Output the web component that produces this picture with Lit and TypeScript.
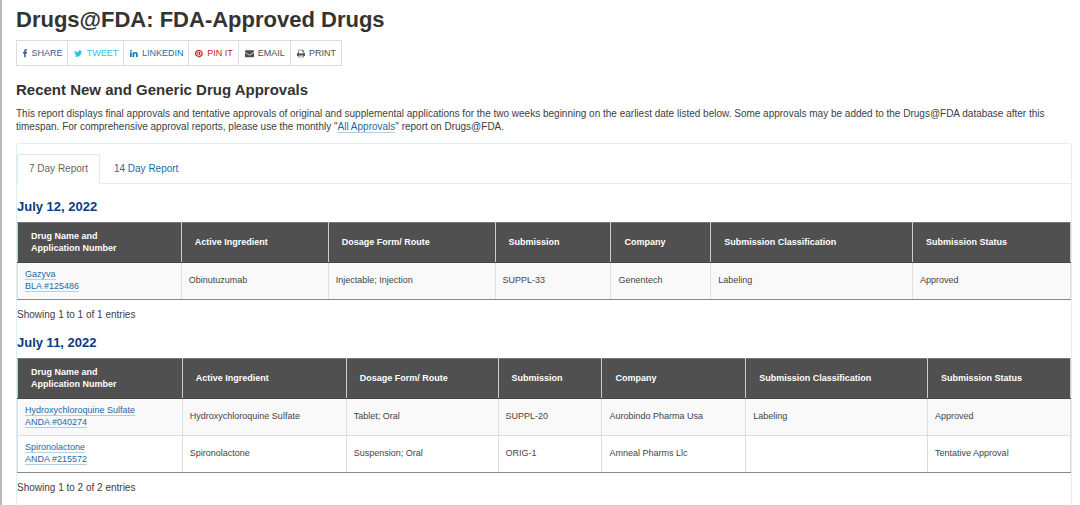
import { LitElement, html, css, svg } from "lit";
import { customElement, property, state } from "lit/decorators.js";
import { classMap } from "lit/directives/class-map.js";

interface Approval {
  name: string;
  application: string;
  ingredient: string;
  form: string;
  submission: string;
  company: string;
  classification: string;
  status: string;
}

interface Report {
  date: string;
  columns: number[];
  rows: Approval[];
}

const HEADINGS = [
  "Drug Name and Application Number",
  "Active Ingredient",
  "Dosage Form/ Route",
  "Submission",
  "Company",
  "Submission Classification",
  "Submission Status",
];

const REPORTS: Report[] = [
  {
    date: "July 12, 2022",
    columns: [164, 147, 167, 116, 100, 202, 158],
    rows: [
      {
        name: "Gazyva",
        application: "BLA #125486",
        ingredient: "Obinutuzumab",
        form: "Injectable; Injection",
        submission: "SUPPL-33",
        company: "Genentech",
        classification: "Labeling",
        status: "Approved",
      },
    ],
  },
  {
    date: "July 11, 2022",
    columns: [165, 164, 152, 104, 144, 182, 143],
    rows: [
      {
        name: "Hydroxychloroquine Sulfate",
        application: "ANDA #040274",
        ingredient: "Hydroxychloroquine Sulfate",
        form: "Tablet; Oral",
        submission: "SUPPL-20",
        company: "Aurobindo Pharma Usa",
        classification: "Labeling",
        status: "Approved",
      },
      {
        name: "Spironolactone",
        application: "ANDA #215572",
        ingredient: "Spironolactone",
        form: "Suspension; Oral",
        submission: "ORIG-1",
        company: "Amneal Pharms Llc",
        classification: "",
        status: "Tentative Approval",
      },
    ],
  },
];

const SHARES = [
  {
    id: "facebook",
    label: "Share",
    box: "500 0 880 1792",
    path: "M1343 12v264h-157q-86 0-116 36t-30 108v189h293l-39 296h-254v759h-306v-759h-255v-296h255v-218q0-186 104-288.5t277-102.5q147 0 228 12z",
  },
  {
    id: "twitter",
    label: "Tweet",
    box: "64 0 1664 1792",
    path: "M1684 408q-67 98-162 167 1 14 1 42 0 130-38 259.5t-115.5 248.5-184.5 210.5-258 146-323 54.5q-271 0-496-145 35 4 78 4 225 0 401-138-105-2-188-64.5t-114-159.5q33 5 61 5 43 0 85-11-112-23-185.5-111.5t-73.5-205.5v-4q68 38 146 41-66-44-105-115t-39-154q0-88 44-163 121 149 294.5 238.5t371.5 99.5q-8-38-8-74 0-134 94.5-228.5t228.5-94.5q140 0 236 102 109-21 205-78-37 115-142 178 93-10 186-50z",
  },
  {
    id: "linkedin",
    label: "Linkedin",
    box: "128 0 1536 1792",
    path: "M477 625v991h-330v-991h330zm21-306q1 73-50.5 122t-135.5 49h-2q-82 0-132-49t-50-122q0-74 51.5-122.5t134.5-48.5 133 48.5 51 122.5zm1166 729v568h-329v-530q0-105-40.5-164.5t-126.5-59.5q-63 0-105.5 34.5t-63.5 85.5q-11 30-11 81v553h-329q2-399 2-647t-1-296l-1-48h329v144h-2q20-32 41-56t56.5-52 87-43.5 114.5-15.5q171 0 275 113.5t104 332.5z",
  },
  {
    id: "pinterest",
    label: "Pin it",
    box: "128 0 1536 1792",
    path: "M1664 896q0 209-103 385.5t-279.5 279.5-385.5 103q-111 0-218-32 59-93 78-164 9-34 54-211 20 39 73 67.5t114 28.5q121 0 216-68.5t147-188.5 52-270q0-114-59.5-214t-172.5-163-255-63q-105 0-196 29t-154.5 77-109 110.5-67 129.5-21.5 134q0 104 40 183t117 111q30 12 38-20 2-7 8-31t8-30q6-23-11-43-51-61-51-151 0-151 104.5-259.5t273.5-108.5q151 0 235.5 82t84.5 213q0 170-68.5 289t-175.5 119q-61 0-98-43.5t-23-104.5q8-35 26.5-93.5t30-103 11.5-75.5q0-50-27-83t-77-33q-62 0-105 57t-43 142q0 73 25 122l-99 418q-17 70-13 177-206-91-333-281t-127-423q0-209 103-385.5t279.5-279.5 385.5-103 385.5 103 279.5 279.5 103 385.5z",
  },
  {
    id: "email",
    label: "Email",
    box: "0 0 1792 1792",
    path: "M1792 710v794q0 66-47 113t-113 47h-1472q-66 0-113-47t-47-113v-794q44 49 101 87 362 246 497 345 57 42 92.5 65.5t94.5 48 110 24.5h2q51 0 110-24.5t94.5-48 92.5-65.5q170-123 498-345 57-39 100-87zm0-294q0 79-49 151t-122 123q-376 261-468 325-10 7-42.5 31t-54 38.5-52 32.5-57.5 27-50 9h-2q-23 0-50-9t-57.5-27-52-32.5-54-38.5-42.5-31q-91-64-262-182.5t-205-142.5q-62-42-117-115.5t-55-136.5q0-78 41.5-130t118.5-52h1472q65 0 112.5 47t47.5 113z",
  },
  {
    id: "print",
    label: "Print",
    box: "64 0 1664 1792",
    path: "M448 1536h896v-256h-896v256zm0-640h896v-384h-160q-40 0-68-28t-28-68v-160h-640v640zm1152 64q0-26-19-45t-45-19-45 19-19 45 19 45 45 19 45-19 19-45zm128 0v416q0 13-9.5 22.5t-22.5 9.5h-224v160q0 40-28 68t-68 28h-960q-40 0-68-28t-28-68v-160h-224q-13 0-22.5-9.5t-9.5-22.5v-416q0-79 56.5-135.5t135.5-56.5h64v-544q0-40 28-68t68-28h672q40 0 88 20t76 48l152 152q28 28 48 76t20 88v256h64q79 0 135.5 56.5t56.5 135.5z",
  },
];

@customElement("share-bar")
export class ShareBar extends LitElement {
  static styles = css`
    :host {
      display: block;
    }
    .list {
      display: flex;
      margin: 0;
      padding: 0;
      list-style: none;
    }
    .item + .item {
      margin-left: -1px;
    }
    .link {
      display: flex;
      align-items: center;
      gap: 4px;
      height: 24px;
      padding: 0 5px 0 6px;
      border: 1px solid #ddd;
      font-size: 9px;
      text-transform: uppercase;
      text-decoration: none;
      white-space: nowrap;
    }
    .icon {
      display: block;
      height: 9px;
      fill: currentColor;
    }
    .facebook {
      color: #3b5998;
    }
    .twitter {
      color: #2fc2ef;
    }
    .linkedin {
      color: #0e76a8;
    }
    .pinterest {
      color: #c92228;
    }
    .email,
    .print {
      color: #4d4d4d;
    }
  `;

  render() {
    return html`<ul class="list">
      ${SHARES.map(
        (s) => html`<li class="item">
          <a class="link ${s.id}" href="#${s.id}">
            <svg class="icon" viewBox=${s.box} aria-hidden="true">${svg`<path d=${s.path}></path>`}</svg
            ><span>${s.label}</span>
          </a>
        </li>`
      )}
    </ul>`;
  }
}

@customElement("approval-report")
export class ApprovalReport extends LitElement {
  @property({ attribute: false }) report!: Report;

  static styles = css`
    :host {
      display: block;
    }
    .date {
      margin: 0 0 7px;
      color: #0a3a82;
      font-size: 13px;
      line-height: 16px;
    }
    .table {
      width: 100%;
      table-layout: fixed;
      border-collapse: collapse;
      font-size: 9px;
      line-height: 12px;
    }
    .head {
      height: 37px;
      padding: 0 36px 2px 13px;
      border: 1px solid #ccc;
      border-top-color: #777;
      border-bottom-color: #444;
      background: #505050;
      color: #fff;
      text-align: left;
      white-space: nowrap;
    }
    .head:first-child {
      white-space: normal;
    }
    .cell {
      height: 34px;
      padding: 0 7px 2px;
      border: 1px solid #ddd;
      color: #444;
    }
    .row:nth-child(odd) {
      background: #f9f9f9;
    }
    .row:last-child .cell {
      border-bottom-color: #888;
    }
    .drug {
      color: #1b6aa5;
      text-decoration: none;
    }
    .line {
      border-bottom: 1px solid #b4cfe2;
    }
    .summary {
      margin: 8px 0 0;
      font-size: 10px;
      line-height: 13px;
    }
  `;

  render() {
    const { date, columns, rows } = this.report;
    const total = columns.reduce((a, b) => a + b, 0);
    return html`
      <h3 class="date">${date}</h3>
      <table class="table" aria-label="Approvals on ${date}">
        <colgroup>
          ${columns.map((c) => html`<col style="width:${(c / total) * 100}%" />`)}
        </colgroup>
        <thead>
          <tr>
            ${HEADINGS.map((h) => html`<th class="head" scope="col">${h}</th>`)}
          </tr>
        </thead>
        <tbody>
          ${rows.map(
            (r) => html`<tr class="row">
              <td class="cell">
                <a class="drug" href="#drug"
                  ><span class="line">${r.name}</span><br /><span class="line">${r.application}</span></a
                >
              </td>
              <td class="cell">${r.ingredient}</td>
              <td class="cell">${r.form}</td>
              <td class="cell">${r.submission}</td>
              <td class="cell">${r.company}</td>
              <td class="cell">${r.classification}</td>
              <td class="cell">${r.status}</td>
            </tr>`
          )}
        </tbody>
      </table>
      <p class="summary">Showing 1 to ${rows.length} of ${rows.length} entries</p>
    `;
  }
}

@customElement("app-root")
export class AppRoot extends LitElement {
  @state() private tab = 0;

  static styles = css`
    :host {
      display: block;
      box-sizing: border-box;
      height: 100vh;
      overflow: hidden;
      padding: 7px 8px 0 14px;
      border-left: 2px solid #bbb;
      background: #fff;
      color: #404040;
      font-family: "Liberation Sans", Arial, sans-serif;
      font-size: 10px;
    }
    .title,
    .subtitle {
      color: #333;
    }
    .title {
      margin: 0 0 8px;
      font-size: 22px;
      line-height: 25px;
    }
    .subtitle {
      margin: 15px 0 8px;
      font-size: 15px;
      line-height: 18px;
    }
    .intro {
      margin: 0;
      font-size: 10px;
      line-height: 13px;
    }
    .link {
      color: #1b6aa5;
      text-decoration: underline 1px #b4cfe2;
      text-underline-offset: 2px;
    }
    .panel {
      margin-top: 10px;
      padding-top: 10px;
      min-height: 100vh;
      border: 1px solid #dceff5;
      border-radius: 3px;
    }
    .tabs {
      display: flex;
      gap: 2px;
      border-bottom: 1px solid #e8ecee;
    }
    .tab {
      margin-bottom: -1px;
      padding: 8px 11px;
      border: 1px solid transparent;
      border-radius: 3px 3px 0 0;
      background: none;
      color: #1b6aa5;
      font-family: inherit;
      font-size: 10px;
      line-height: 12px;
      cursor: pointer;
    }
    .active {
      border-color: #e4e8ea;
      border-bottom-color: #fff;
      background: #fff;
      color: #666;
    }
    .reports {
      display: grid;
      gap: 14px;
      padding-top: 15px;
    }
  `;

  render() {
    return html`
      <h1 class="title">Drugs@FDA: FDA-Approved Drugs</h1>
      <share-bar></share-bar>
      <h2 class="subtitle">Recent New and Generic Drug Approvals</h2>
      <p class="intro">
        This report displays final approvals and tentative approvals of original and supplemental applications for the
        two weeks beginning on the earliest date listed below. Some approvals may be added to the Drugs@FDA database
        after this timespan. For comprehensive approval reports, please use the monthly "<a class="link" href="#all"
          >All Approvals</a
        >" report on Drugs@FDA.
      </p>
      <section class="panel">
        <div class="tabs" role="tablist">
          ${["7 Day Report", "14 Day Report"].map(
            (label, i) => html`<button
              class=${classMap({ tab: true, active: this.tab === i })}
              role="tab"
              aria-selected=${this.tab === i ? "true" : "false"}
              @click=${() => (this.tab = i)}
            >
              ${label}
            </button>`
          )}
        </div>
        <div class="reports">
          ${REPORTS.map((r) => html`<approval-report .report=${r}></approval-report>`)}
        </div>
      </section>
    `;
  }
}
